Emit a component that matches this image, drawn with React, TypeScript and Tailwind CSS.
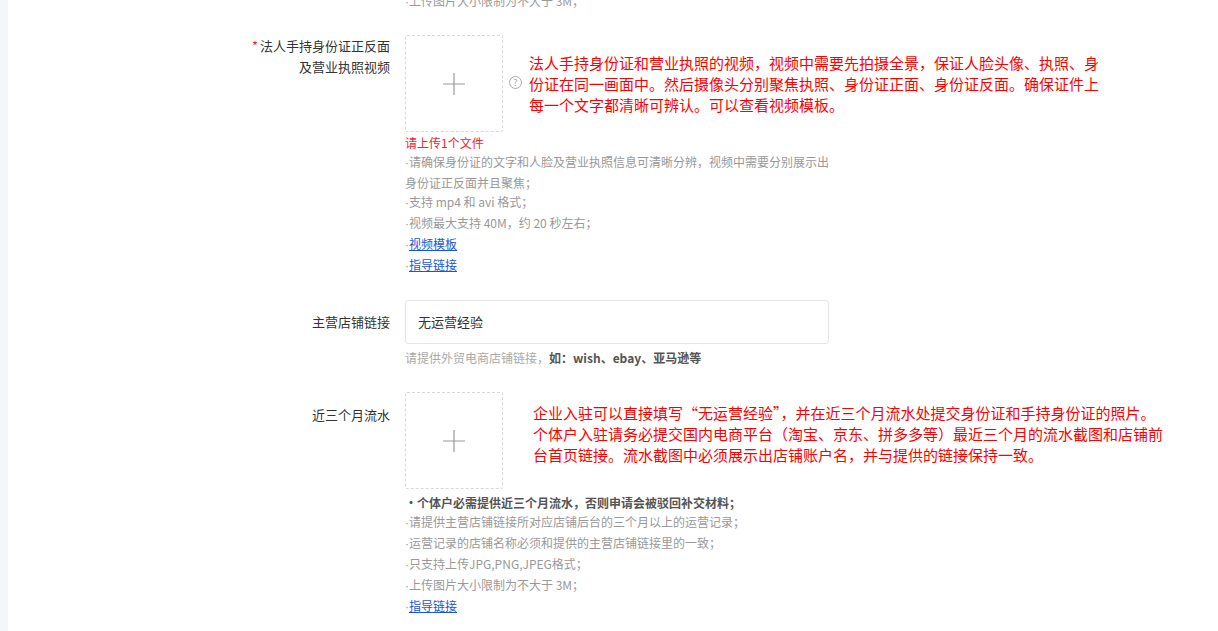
import React from "react";

const f = { fontFamily: '"Microsoft YaHei","Noto Sans CJK SC",sans-serif' };

function Box() {
  return (
    <div className="w-[98px] h-[97px] border border-dashed border-[#d9d9d9] rounded-[2px] flex items-center justify-center shrink-0">
      <svg width="24" height="24" viewBox="0 0 24 24"><path d="M12 1v22M1 12h22" stroke="#999" strokeWidth="1.2" /></svg>
    </div>
  );
}

function D() {
  return <span style={{ fontFamily: '"Liberation Sans",sans-serif' }}>·</span>;
}

const g = "text-[12px] leading-[19px] text-[#999] whitespace-nowrap";

export default function App() {
  return (
    <div style={f} className="w-[1218px] h-[631px] overflow-hidden bg-[#f5f6f7] flex">
      <div className="w-[8px] shrink-0" />
      <div className="flex-1 bg-white relative flex flex-col">
        <div className="h-[14px] -mt-[9px] pl-[397px] text-[12px] leading-[19px] text-[#999]"><D />上传图片大小限制为不大于 3M；</div>
        <div className="flex mt-[30px]">
          <div className="w-[382px] shrink-0 text-right text-[13px] leading-[21px] text-[#333] pr-[0px]">
            <span className="text-[#f5222d] mr-[2px]">*</span>法人手持身份证正反面<br />及营业执照视频
          </div>
          <div className="pl-[15px]">
            <div className="flex">
              <Box />
              <div className="ml-[6px] mt-[41px] w-[13px] h-[13px] rounded-full border border-[#aaa] text-[9px] leading-[11px] text-[#aaa] text-center">?</div>
              <div className="ml-[7px] mt-[17px] text-[15px] leading-[21px] text-[#ff0000] whitespace-nowrap">
                法人手持身份证和营业执照的视频，视频中需要先拍摄全景，保证人脸头像、执照、身<br />份证在同一画面中。然后摄像头分别聚焦执照、身份证正面、身份证反面。确保证件上<br />每一个文字都清晰可辨认。可以查看视频模板。
              </div>
            </div>
            <div className="text-[12px] leading-[19px] text-[#f5222d] mt-[1px]">请上传1个文件</div>
            <div className={g}><D />请确保身份证的文字和人脸及营业执照信息可清晰分辨，视频中需要分别展示出<br />身份证正反面并且聚焦；</div>
            <div className={g}><D />支持 mp4 和 avi 格式；</div>
            <div className={g}><D />视频最大支持 40M，约 20 秒左右；</div>
            <div className={g}><D /><span className="text-[#1a55d6] underline">视频模板</span></div>
            <div className={g}><D /><span className="text-[#1a55d6] underline">指导链接</span></div>
          </div>
        </div>
        <div className="flex mt-[24px]">
          <div className="w-[382px] shrink-0 text-right text-[13px] leading-[43px] text-[#333]">主营店铺链接</div>
          <div className="pl-[15px]">
            <div className="w-[424px] h-[44px] border border-[#e5e5e5] rounded-[3px] px-[12px] flex items-center text-[13px] text-[#333]">无运营经验</div>
            <div className="text-[12px] leading-[19px] text-[#aaa] mt-[4px]">请提供外贸电商店铺链接，<b className="text-[#555]">如：wish、ebay、亚马逊等</b></div>
          </div>
        </div>
        <div className="flex mt-[25px]">
          <div className="w-[382px] shrink-0 text-right text-[13px] leading-[21px] text-[#333] pt-[12px]">近三个月流水</div>
          <div className="pl-[15px]">
            <div className="flex">
              <Box />
              <div className="ml-[30px] mt-[10px] text-[15px] leading-[21px] text-[#ff0000] whitespace-nowrap">
                企业入驻可以直接填写“无运营经验”，并在近三个月流水处提交身份证和手持身份证的照片。<br />个体户入驻请务必提交国内电商平台（淘宝、京东、拼多多等）最近三个月的流水截图和店铺前<br />台首页链接。流水截图中必须展示出店铺账户名，并与提供的链接保持一致。
              </div>
            </div>
            <div className="text-[12px] leading-[19px] text-[#555] font-bold mt-[4px]">•个体户必需提供近三个月流水，否则申请会被驳回补交材料；</div>
            <div className={g}><D />请提供主营店铺链接所对应店铺后台的三个月以上的运营记录；</div>
            <div className={g}><D />运营记录的店铺名称必须和提供的主营店铺链接里的一致；</div>
            <div className={g}><D />只支持上传JPG,PNG,JPEG格式；</div>
            <div className={g}><D />上传图片大小限制为不大于 3M；</div>
            <div className={g}><D /><span className="text-[#1a55d6] underline">指导链接</span></div>
          </div>
        </div>
        <div className="mt-[30px] ml-[25px] border-t border-[#e8e8e8] relative">
          <div className="absolute left-[372px] -top-[7px] w-[424px] h-[20px] border border-[#e5e5e5] rounded-[3px] bg-white" />
        </div>
      </div>
    </div>
  );
}
